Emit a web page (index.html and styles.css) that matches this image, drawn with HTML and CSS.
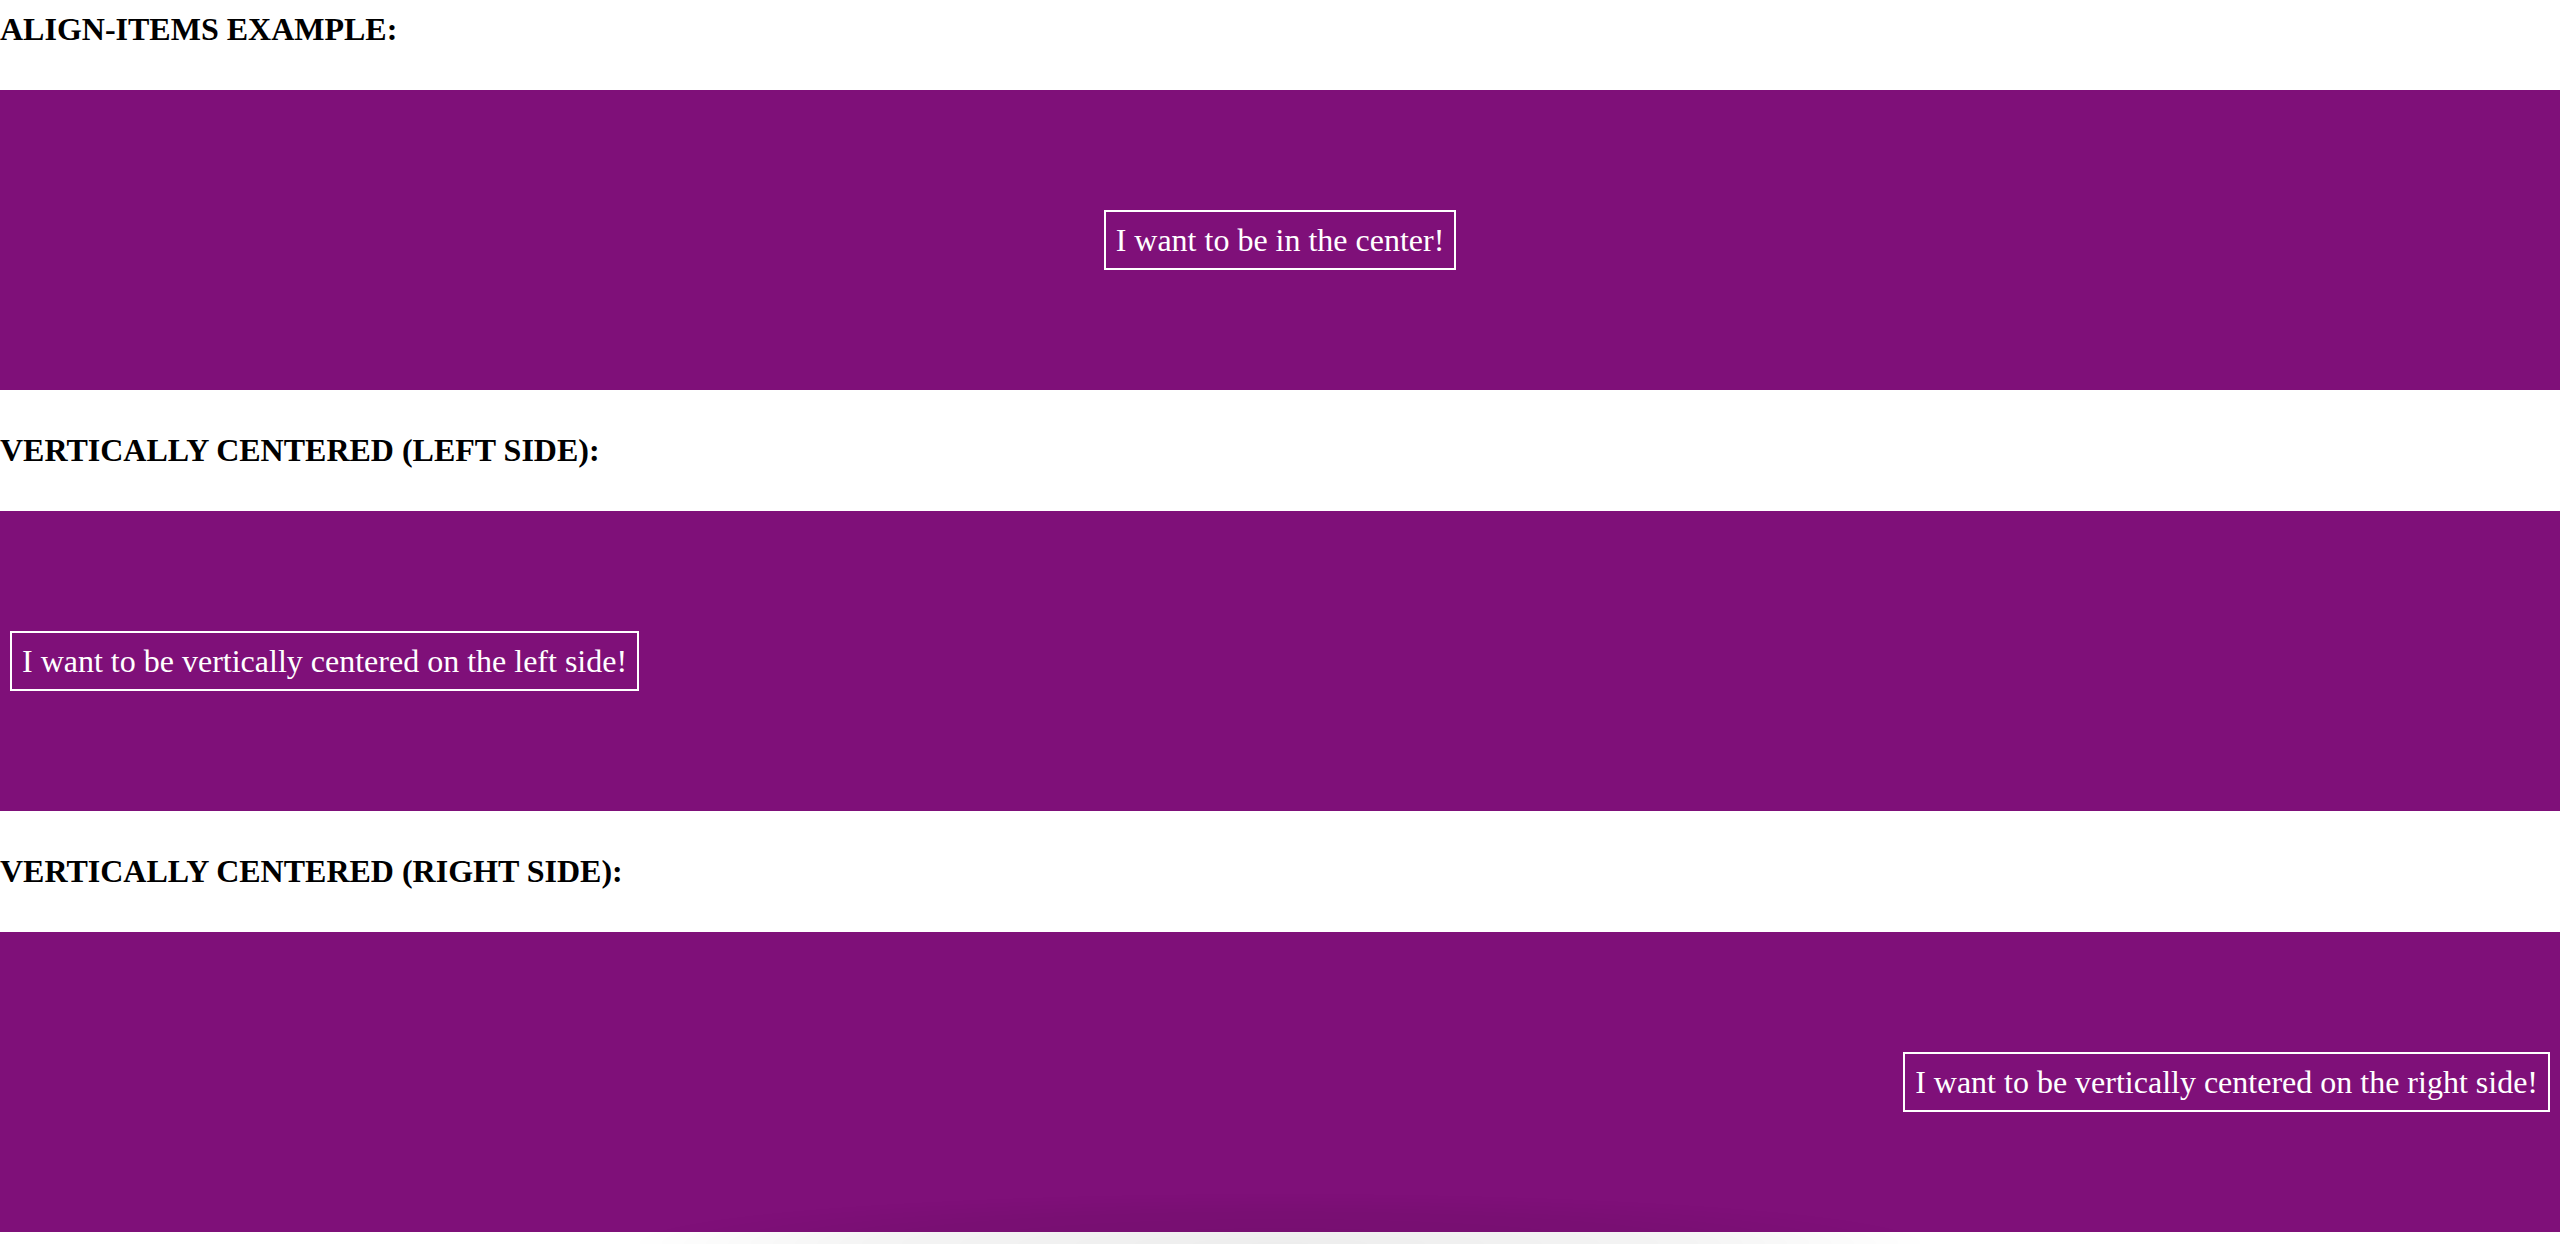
FILE: index.html
```html
<!DOCTYPE html>
<html lang="en">
<head>
<meta charset="utf-8">
<title>Align-items example</title>
<link rel="stylesheet" href="styles.css">
</head>
<body>
  <h4 class="heading heading-first">ALIGN-ITEMS EXAMPLE:</h4>
  <div class="flex-box center">
    <div class="item">I want to be in the center!</div>
  </div>

  <h4 class="heading">VERTICALLY CENTERED (LEFT SIDE):</h4>
  <div class="flex-box left">
    <div class="item">I want to be vertically centered on the left side!</div>
  </div>

  <h4 class="heading">VERTICALLY CENTERED (RIGHT SIDE):</h4>
  <div class="flex-box right">
    <div class="item">I want to be vertically centered on the right side!</div>
  </div>

  <div class="dock-shadow"></div>
</body>
</html>
```

FILE: styles.css
```css
html, body {
  margin: 0;
  padding: 0;
  background: #ffffff;
}

body {
  font-family: "Liberation Serif", "Times New Roman", serif;
  color: #000000;
  overflow: hidden;
  height: 1244px;
}

.heading {
  font-size: 32px;
  font-weight: bold;
  line-height: 36px;
  margin: 42px 0 43px 0;
}

.heading-first {
  margin-top: 11px;
}

.flex-box {
  display: flex;
  align-items: center;
  height: 300px;
  background: #7f1079;
  padding: 0 10px;
}

.flex-box.center {
  justify-content: center;
}

.flex-box.left {
  justify-content: flex-start;
}

.flex-box.right {
  justify-content: flex-end;
}

.item {
  color: #ffffff;
  border: 2px solid #ffffff;
  padding: 10px;
  font-size: 32px;
  line-height: 36px;
  white-space: nowrap;
}

.dock-shadow {
  position: fixed;
  left: 640px;
  bottom: 0;
  width: 1280px;
  height: 50px;
  background: radial-gradient(ellipse at 50% 100%, rgba(0, 0, 0, 0.07) 0%, rgba(0, 0, 0, 0.045) 45%, rgba(0, 0, 0, 0) 72%);
  pointer-events: none;
}
```
